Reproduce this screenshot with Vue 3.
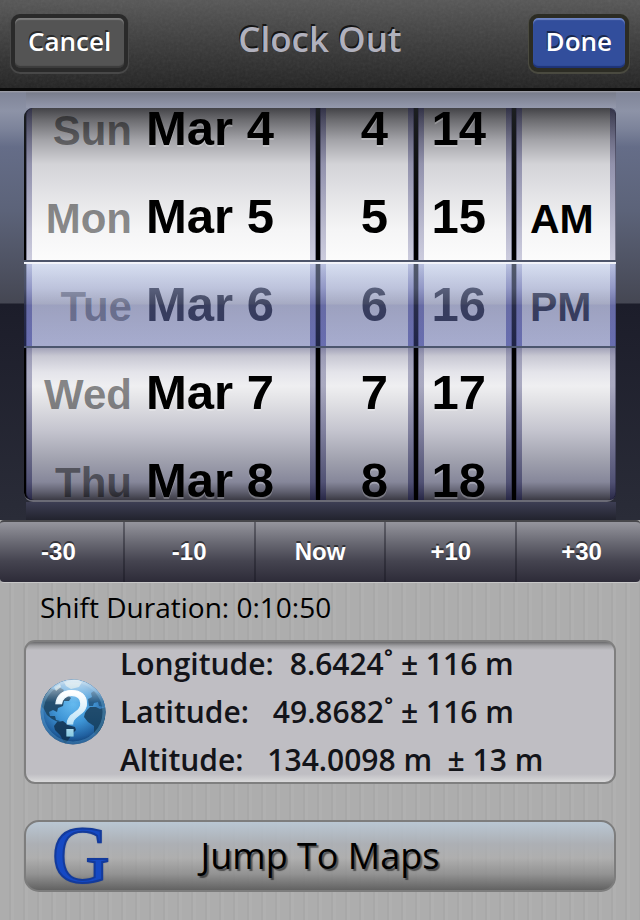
<script setup>
import { ref, computed } from 'vue';

const dates = [
  { day: 'Sun', text: 'Mar 4' },
  { day: 'Mon', text: 'Mar 5' },
  { day: 'Tue', text: 'Mar 6' },
  { day: 'Wed', text: 'Mar 7' },
  { day: 'Thu', text: 'Mar 8' },
];
const hours = ['4', '5', '6', '7', '8'];
const minutes = ['14', '15', '16', '17', '18'];
const periods = ['', 'AM', 'PM', '', ''];

const wheels = [
  { key: 'date', label: 'Date', rows: dates },
  { key: 'hour', label: 'Hour', rows: hours.map((text) => ({ text })) },
  { key: 'minute', label: 'Minute', rows: minutes.map((text) => ({ text })) },
  { key: 'period', label: 'AM or PM', rows: periods.map((text) => ({ text })) },
];

const steps = [
  { label: '-30', value: -30 },
  { label: '-10', value: -10 },
  { label: 'Now', value: 0 },
  { label: '+10', value: 10 },
  { label: '+30', value: 30 },
];

const BASE_MINUTES = 10;
const minutesWorked = ref(BASE_MINUTES);

const duration = computed(() => {
  const total = Math.max(0, minutesWorked.value);
  const h = Math.floor(total / 60);
  const m = String(total % 60).padStart(2, '0');
  return `${h}:${m}:50`;
});

function step(value) {
  minutesWorked.value = value === 0 ? BASE_MINUTES : minutesWorked.value + value;
}

const location = [
  { name: 'Longitude:', value: '8.6424˚ ± 116 m' },
  { name: 'Latitude:', value: ' 49.8682˚ ± 116 m' },
  { name: 'Altitude:', value: ' 134.0098 m  ± 13 m' },
];
</script>

<template>
  <div class="page">
    <header class="bar">
      <svg class="grain" aria-hidden="true">
        <filter id="grain">
          <feTurbulence type="fractalNoise" baseFrequency="0.35" numOctaves="2" />
          <feColorMatrix type="saturate" values="0" />
        </filter>
        <rect width="100%" height="100%" filter="url(#grain)" />
      </svg>
      <button type="button" class="bar-btn">Cancel</button>
      <h1>Clock Out</h1>
      <button type="button" class="bar-btn bar-btn--done">Done</button>
    </header>

    <section class="picker">
      <div class="gloss gloss--top"></div>
      <div class="frame">
        <div v-for="w in wheels" :key="w.key" class="wheel" :class="`wheel--${w.key}`">
          <ul :aria-label="w.label">
            <li v-for="(row, i) in w.rows" :key="i" :class="{ selected: i === 2 }">
              <span v-if="row.day" class="day">{{ row.day }}</span>
              <span>{{ row.text }}</span>
            </li>
          </ul>
        </div>
        <div class="selection"></div>
      </div>
      <div class="gloss gloss--bottom"></div>
    </section>

    <div class="steps">
      <div class="steps-row">
        <button v-for="s in steps" :key="s.label" type="button" @click="step(s.value)">
          {{ s.label }}
        </button>
      </div>
    </div>

    <main class="content">
      <p class="duration">Shift Duration: {{ duration }}</p>

      <section class="location">
        <svg class="globe" viewBox="0 0 66 66" aria-hidden="true">
          <defs>
            <radialGradient id="sea" cx="0.5" cy="0.38" r="0.64">
              <stop offset="0" stop-color="#58b4ee" />
              <stop offset="0.45" stop-color="#3590d4" />
              <stop offset="0.8" stop-color="#1c5d9e" />
              <stop offset="1" stop-color="#0d3566" />
            </radialGradient>
            <linearGradient id="shine" x1="0" y1="0" x2="0" y2="1">
              <stop offset="0" stop-color="#fff" stop-opacity="0.75" />
              <stop offset="0.35" stop-color="#fff" stop-opacity="0.08" />
              <stop offset="1" stop-color="#fff" stop-opacity="0" />
            </linearGradient>
            <linearGradient id="mark" x1="0" y1="0" x2="0" y2="1">
              <stop offset="0.2" stop-color="#fff" />
              <stop offset="0.6" stop-color="#c3e6f8" />
              <stop offset="0.85" stop-color="#7cc4dc" />
            </linearGradient>
            <clipPath id="ball"><circle cx="33" cy="33" r="32.5" /></clipPath>
          </defs>
          <circle cx="33" cy="33" r="32.5" fill="url(#sea)" />
          <g clip-path="url(#ball)">
            <path
              fill="#103f63"
              d="M4 16 L10 9 L15 11 L19 8 L24 11 L22 15 L27 15 L31 19 L29 22 L24 22 L23 27 L18 29 L17 33 L13 31 L9 33 L10 37 L15 37 L16 41 L20 42 L18 43 L12 40 L7 36 L4 30 L2 28 Z"
            />
            <path
              fill="#0d3559"
              d="M17 43 L23 42 L28 46 L35 48 L36 51 L32 55 L29 60 L25 65 L20 56 L15 51 L14 47 Z"
            />
            <path
              fill="#103f63"
              d="M47 31 L50 28 L56 28 L60 30 L66 28 L66 47 L61 50 L58 56 L54 54 L54 47 L48 43 L44 38 L45 34 Z"
            />
            <path
              fill="#155080"
              d="M48 20 L52 18 L51 14 L54 12 L60 16 L65 24 L64 28 L59 27 L58 23 L54 24 L53 27 L49 27 Z"
            />
            <path fill="#c9dfdf" opacity="0.75" d="M24 3 L35 0 L42 3 L39 8 L31 10 L26 7 Z M14 8 L20 5 L21 8 L16 12 Z" />
            <circle cx="33" cy="33" r="31" fill="none" stroke="#63b0df" stroke-width="3" opacity="0.35" />
            <circle cx="33" cy="33" r="32.5" fill="url(#shine)" />
          </g>
          <text x="31" y="57" text-anchor="middle" class="globe-mark" fill="url(#mark)" stroke="url(#mark)">?</text>
        </svg>
        <dl>
          <div v-for="l in location" :key="l.name" class="reading">
            <dt>{{ l.name }}</dt>
            <dd>{{ l.value }}</dd>
          </div>
        </dl>
      </section>

      <button type="button" class="maps">
        <span class="maps-logo" aria-hidden="true">G</span>
        <span class="maps-text">Jump To Maps</span>
      </button>
    </main>
  </div>
</template>

<style>
body {
  margin: 0;
  background: #adadad;
}
</style>

<style scoped>
.page {
  min-height: 100vh;
  display: flex;
  flex-direction: column;
  font-family: 'Trebuchet MS', 'Open Sans', 'Noto Sans', sans-serif;
  background: repeating-linear-gradient(90deg, #adadad 0, #adadad 9px, #a8a8a8 9px, #a8a8a8 11px, #b0b0b0 11px, #b0b0b0 14px);
}

button {
  font-family: inherit;
  cursor: pointer;
}

/* top bar */
.bar {
  position: relative;
  display: grid;
  grid-template-columns: 1fr auto 1fr;
  align-items: start;
  justify-items: start;
  box-sizing: border-box;
  height: 91px;
  padding: 14px 11px 0;
  background: linear-gradient(#575757, #3c3c3c 50%, #232323);
  border-bottom: 3px solid #0a0a0a;
}

.grain {
  position: absolute;
  inset: 0;
  width: 100%;
  height: 100%;
  opacity: 0.08;
}

.bar h1 {
  position: relative;
  margin: 0;
  font-size: 35px;
  line-height: 50px;
  font-weight: 600;
  color: #b1b1bd;
  text-shadow: -1px -2px 0 #151515;
}

.bar-btn {
  position: relative;
  box-sizing: border-box;
  height: 58px;
  padding: 0 13px 4px;
  border: 4px solid #2a2a2a;
  border-radius: 9px;
  background: #545454;
  background-clip: padding-box;
  box-shadow: inset 0 2px 1px #7c7c7c, inset 0 -2px 1px #3b3b3b, 0 1px 0 1px #484848;
  color: #fff;
  font-size: 26px;
  font-weight: 600;
  line-height: 46px;
  text-shadow: -1px -2px 0 rgba(0, 0, 0, 0.5);
}

.bar-btn--done {
  justify-self: end;
  border-color: #2c2c24;
  background-color: #324e9c;
  box-shadow: inset 0 2px 1px #6d84c4, inset 0 -2px 1px #1d3377, 0 1px 0 1px #4a4a40;
}

/* wheels */
.picker {
  padding: 0 24px;
  background: linear-gradient(
    #a3a3ab 0,
    #808598 2px,
    #8d93a7 20px,
    #7c839a 38px,
    #656d88 56px,
    #5c6379 120px,
    #454753 212px,
    #1c1d2a 213px,
    #2a2c38 100%
  );
}

.gloss {
  height: 17px;
  margin: 0 0 0 2px;
}

.gloss--top {
  background: linear-gradient(#a3a3ab 0, #797d8c 2px, #9499ad);
}

.gloss--bottom {
  height: 18px;
  background: linear-gradient(#3d3e54, #22232e);
}

.frame {
  position: relative;
  display: grid;
  grid-template-columns: 290fr 94fr 94fr 100fr;
  gap: 4px;
  height: 392px;
  padding-left: 2px;
  border-bottom: 2px solid #6b6b76;
  border-radius: 9px;
  background: linear-gradient(#1c1f22, #000 120px);
}

.wheel {
  position: relative;
  height: 392px;
  min-width: 0;
  background: linear-gradient(
    #434347 0,
    #6c6c70 12px,
    #a3a3a8 32px,
    #d3d3d7 56px,
    #e4e4e7 88px,
    #f5f5f6 122px,
    #fcfcfc 153px,
    #fff 239px,
    #a3a3b8 240px,
    #c8c8d3 248px,
    #e4e4ea 264px,
    #efeff1 278px,
    #dfdfe3 296px,
    #c5c5cf 322px,
    #a0a1ae 352px,
    #86879a 374px,
    #5f5f6e 384px,
    #3b3a44 392px
  );
}

/* rounded ridges on both sides of a wheel */
.wheel::before,
.wheel::after {
  content: '';
  position: absolute;
  top: 0;
  bottom: 0;
  width: 6px;
  background: linear-gradient(
    rgba(30, 30, 70, 0.45) 0,
    rgba(50, 50, 110, 0.4) 60px,
    rgba(60, 60, 130, 0.25) 152px,
    rgba(20, 20, 120, 0.25) 156px,
    rgba(20, 20, 140, 0.5) 196px,
    rgba(20, 20, 140, 0.5) 239px,
    rgba(50, 50, 110, 0.28) 240px,
    rgba(40, 40, 100, 0.4) 300px,
    rgba(20, 20, 70, 0.5) 100%
  );
}

.wheel::before {
  left: 0;
  box-shadow: inset 1px 0 0 rgba(30, 30, 50, 0.45);
}

.wheel::after {
  right: 0;
  box-shadow: inset -1px 0 0 rgba(30, 30, 50, 0.45);
}

.wheel--date,
.wheel--date::before {
  border-radius: 8px 0 0 8px;
}

.wheel--period,
.wheel--period::after {
  border-radius: 0 8px 8px 0;
}

.wheel ul {
  display: flex;
  flex-direction: column;
  justify-content: center;
  box-sizing: border-box;
  height: 100%;
  margin: 0;
  padding: 0 26px 0 0;
  list-style: none;
}

.wheel--date ul {
  padding-right: 42px;
}

.wheel--period ul {
  padding: 6px 0 0 14px;
}

.wheel li {
  flex: none;
  display: flex;
  align-items: baseline;
  justify-content: flex-end;
  gap: 14px;
  height: 88px;
  font: bold 49px/88px 'Liberation Sans', Arial, sans-serif;
  color: #000;
  white-space: nowrap;
  text-shadow: 0 2px 0 rgba(255, 255, 255, 0.25);
}

.wheel li.selected {
  color: #24262c;
  text-shadow: 0 2px 0 #fff;
}

.wheel .day {
  font-size: 42px;
  color: rgba(0, 0, 0, 0.46);
  text-shadow: none;
}

.wheel--period li {
  justify-content: flex-start;
  font-size: 41px;
}

.selection {
  position: absolute;
  top: 152px;
  left: 0;
  right: 0;
  height: 84px;
  border-top: 2px solid #4d556a;
  border-bottom: 2px solid #4c566e;
  background: linear-gradient(
    #f2f4fa 0,
    #f2f4fa 2px,
    rgba(172, 189, 227, 0.475) 2px,
    rgba(135, 146, 192, 0.54) 26px,
    rgba(92, 100, 145, 0.54) 42px,
    rgba(74, 82, 138, 0.54) 43px,
    rgba(68, 79, 152, 0.47) 100%
  );
}

/* minute steps */
.steps {
  overflow: hidden;
  border-radius: 4px;
  border-top: 2px solid #47474b;
  border-bottom: 1px solid #c8c8c8;
  background: linear-gradient(#95959d, #686872 35%, #454450 65%, #2d2b38);
}

.steps-row {
  display: flex;
  margin: 0 -8px 0 -6px;
}

.steps-row button {
  flex: 1 1 0;
  height: 60px;
  padding: 0;
  border: 0;
  border-right: 2px solid rgba(20, 20, 30, 0.4);
  background: none;
  color: #fff;
  font: bold 24px/56px 'Liberation Sans', Arial, sans-serif;
  text-shadow: 0 -2px 0 rgba(0, 0, 0, 0.5);
}

/* lower part */
.content {
  padding: 0 24px 28px;
}

.duration {
  margin: 0 16px;
  font-size: 28px;
  line-height: 48px;
  color: #000;
}

.location {
  display: flex;
  align-items: center;
  gap: 14px;
  box-sizing: border-box;
  min-height: 144px;
  margin-top: 9px;
  padding: 0 14px;
  border: 2px solid #7f7f7f;
  border-radius: 11px;
  background: linear-gradient(#6b6b6d 0, #a2a2a5 4px, #bfbec3 8px, #bfbec3 132px, #d9d9da 100%);
}

.globe {
  flex: none;
  width: 66px;
  height: 66px;
  overflow: visible;
}

.globe-mark {
  font: 64px 'Liberation Sans', Arial, sans-serif;
  stroke-width: 1px;
}

.location dl {
  margin: -2px 0;
}

.reading {
  display: flex;
  gap: 16px;
  height: 48px;
  font-size: 30px;
  font-weight: 600;
  line-height: 48px;
  color: #131419;
  white-space: pre;
}

.reading dd {
  margin: 0;
}

.maps {
  position: relative;
  display: block;
  box-sizing: border-box;
  width: 100%;
  height: 72px;
  margin-top: 36px;
  padding: 0;
  border: 2px solid #7d7d7d;
  border-radius: 15px;
  background: linear-gradient(
    rgba(186, 200, 213, 0.95) 0,
    rgba(172, 176, 182, 0.8) 22px,
    rgba(176, 176, 176, 0.5) 36px,
    rgba(140, 140, 140, 0.8) 52px,
    #626262 100%
  );
  color: #000;
}

.maps-logo {
  position: absolute;
  top: -7px;
  left: 26px;
  font: 80px/80px 'Liberation Serif', 'Times New Roman', serif;
  color: #1549c4;
  -webkit-text-stroke: 2px #123a9c;
  text-shadow: 0 0 2px #0c1f4a;
}

.maps-text {
  font-size: 36px;
  line-height: 64px;
  text-shadow: 2px 2px 1px rgba(0, 0, 0, 0.5);
}
</style>
